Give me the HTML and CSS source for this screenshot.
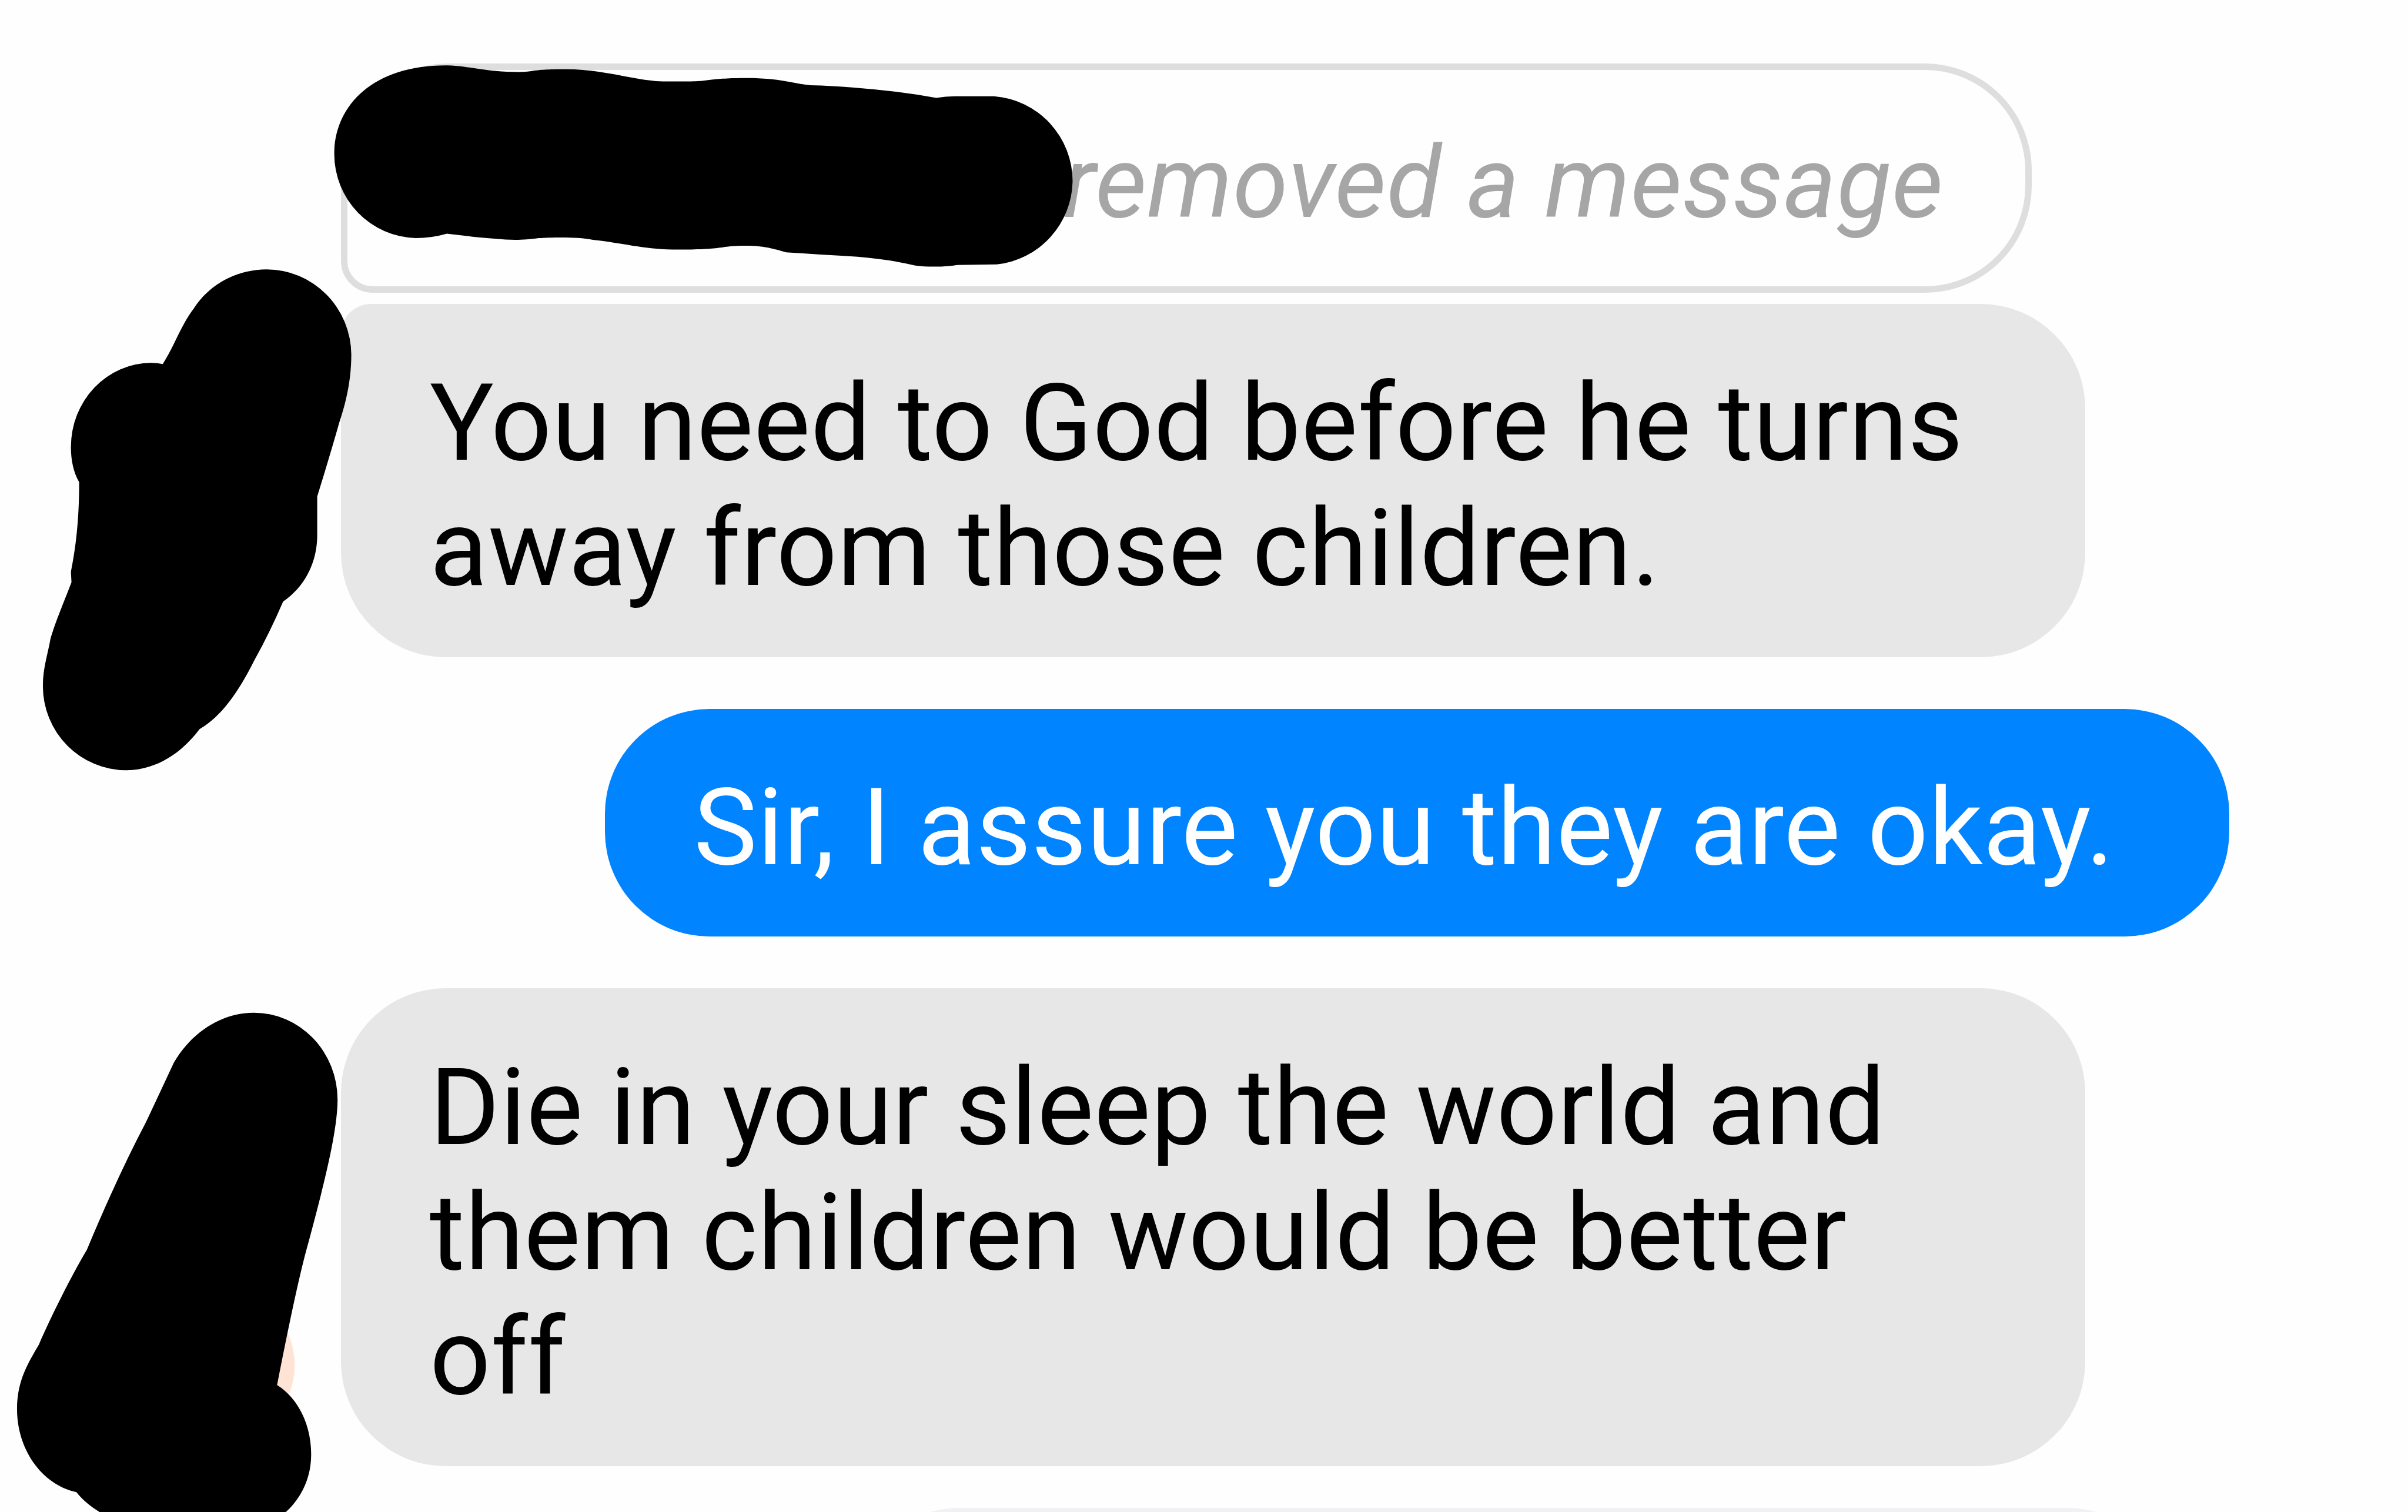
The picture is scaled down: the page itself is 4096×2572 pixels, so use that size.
FILE: index.html
```html
<!DOCTYPE html>
<html lang="en">
<head>
<meta charset="utf-8">
<title>Conversation</title>
<link rel="stylesheet" href="styles.css">
</head>
<body>
<main class="thread">
  <div class="bubble removed"><p>removed a message</p></div>
  <div class="bubble received grouped"><p>You need to God before he turns<br>away from those children.</p></div>
  <div class="bubble sent"><p>Sir, I assure you they are okay.</p></div>
  <div class="bubble received last"><p>Die in your sleep the world and<br>them children would be better<br>off</p></div>
  <div class="bubble next"></div>
</main>
<svg class="marker" viewBox="0 0 4380 2750" preserveAspectRatio="none" aria-hidden="true">
  <circle class="avatar" cx="396" cy="2483" r="140"/>
  <path d="M608 280C608 195 675 119 811 119C850 119 880 131 943 131C975 131 960 126 1030 126C1100 126 1160 148 1206 148L1258 148C1290 148 1290 142 1359 142C1420 142 1440 152 1474 155Q1515 156 1550 159Q1630 165 1703 178Q1720 175 1737 175L1808 175A155 155 0 0 1 1951 330A155 155 0 0 1 1813 481L1741 482Q1725 485 1700 485Q1680 485 1665 483Q1620 472 1560 467Q1490 463 1430 459C1405 452 1390 447 1354 447C1310 447 1320 454 1235 454C1170 454 1140 443 1077 436C1050 430 1000 432 980 433C950 437 930 437 900 434C860 431 840 428 813 425Q785 433 756 433A152 153 0 0 1 608 280Z"/>
  <path d="M296 662C316 632 330 590 352 562C378 520 428 490 485 490A154 156 0 0 1 639 645C639 700 625 745 617 769Q597 839 577 903L577 973C577 1025 553 1068 515 1094Q490 1152 462 1202C434 1258 403 1303 363 1326C330 1370 285 1400 230 1401A152 153 0 0 1 78 1247C78 1215 87 1190 92 1161C102 1128 115 1098 130 1059L129 1040C137 1000 144 950 144 877C133 858 129 835 129 813A146 153 0 0 1 275 660Q286 660 296 662Z"/>
  <path d="M316 1933C347 1880 400 1842 462 1842A152 158 0 0 1 614 2000C614 2060 587 2163 561 2260Q541 2329 504 2519C545 2545 566 2595 566 2645C566 2690 547 2725 520 2750L181 2750C165 2740 150 2728 139 2714C75 2700 31 2635 31 2563C31 2510 52 2478 71 2445C90 2400 130 2320 158 2273Q214 2139 265 2042Q296 1976 316 1933Z"/>
</svg>
</body>
</html>
```
FILE: styles.css
```css
body {
  margin: 0;
  width: 4096px;
  height: 2572px;
  overflow: hidden;
  position: relative;
  background: #fefefe;
  font-family: Roboto, "Liberation Sans", sans-serif;
}

.thread {
  display: flex;
  flex-direction: column;
  align-items: flex-start;
  box-sizing: border-box;
  height: 2572px;
  overflow: hidden;
  padding: 108px 304px 0 580px;
}

.bubble {
  flex: none;
  box-sizing: border-box;
  border-radius: 178px;
  padding: 97px 151px 0;
  font-size: 181.5px;
  line-height: 212.7px;
  letter-spacing: 0.45px;
  white-space: nowrap;
}

.bubble p {
  margin: 0;
}

.removed {
  display: flex;
  justify-content: flex-end;
  width: 2876px;
  height: 390px;
  padding: 93px 139px 0;
  border: 11px solid #dedede;
  border-radius: 182px;
  border-bottom-left-radius: 54px;
  color: #a6a6a6;
  font-size: 170.6px;
  font-style: italic;
  line-height: 199.5px;
  letter-spacing: 0.55px;
}

.received {
  width: 2967px;
  background: #e7e7e7;
  color: #000;
}

.grouped {
  height: 601px;
  margin-top: 19px;
  border-top-left-radius: 51px;
}

.sent {
  align-self: flex-end;
  width: 2763px;
  height: 387px;
  margin-top: 88px;
  padding-top: 96px;
  background: #0084ff;
  color: #fff;
  letter-spacing: 0.5px;
}

.last {
  height: 813px;
  margin-top: 88px;
  letter-spacing: 0.5px;
}

.next {
  align-self: flex-end;
  width: 2240px;
  height: 390px;
  margin: 71px 98px 0 0;
  background: #f1f1f3;
}

.marker {
  position: absolute;
  inset: 0;
  width: 4096px;
  height: 2572px;
}

.avatar {
  fill: #ffe3d5;
}
```
